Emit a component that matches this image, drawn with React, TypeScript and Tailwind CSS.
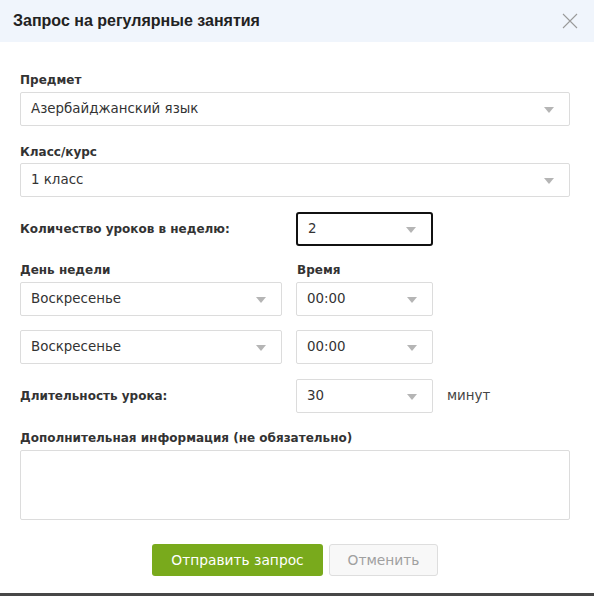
import React from "react";

const Caret = () => (
  <svg width="10" height="6" viewBox="0 0 10 6" className="shrink-0">
    <path d="M0 0 L10 0 L5 6 Z" fill="#b5b5b5" />
  </svg>
);

const Select = ({ value, className = "", focused = false }: { value: string; className?: string; focused?: boolean }) => (
  <div
    className={
      "flex h-[34px] items-center justify-between bg-white pl-[10px] pr-[15px] pt-px text-[13.4px] text-[#333] " +
      (focused ? "rounded-[3px] border-2 border-[#111] pl-[9px] pr-[14px] " : "rounded-[2px] border border-[#dcdcdc] ") +
      className
    }
  >
    <span>{value}</span>
    <Caret />
  </div>
);

export default function App() {
  const font = { fontFamily: '"DejaVu Sans", Verdana, sans-serif' };
  return (
    <div className="relative h-[596px] w-[594px] overflow-hidden bg-white" style={font}>
      <div className="flex h-[42px] items-center justify-between bg-[#f0f5fc] pl-[13px] pr-[16px]">
        <span
          className="text-[16px] font-bold text-[#222]"
          style={{ fontFamily: '"Liberation Sans", Arial, sans-serif' }}
        >
          Запрос на регулярные занятия
        </span>
        <svg width="16" height="16" viewBox="0 0 16 16">
          <path d="M1 1 L15 15 M15 1 L1 15" stroke="#9a9a9a" strokeWidth="1.1" />
        </svg>
      </div>

      <div className="pl-5 pr-6 pt-[30px]">
        <div className="h-4 text-[12px] font-bold leading-4 text-[#333]">Предмет</div>
        <Select value="Азербайджанский язык" className="mt-1" />

        <div className="mt-[18px] h-4 text-[12px] font-bold leading-4 text-[#333]">Класс/курс</div>
        <Select value="1 класс" className="mt-[3px]" />

        <div className="mt-[15px] flex items-center">
          <div className="w-[276px] text-[12px] font-bold text-[#333]">Количество уроков в неделю:</div>
          <Select value="2" focused className="w-[137px]" />
        </div>

        <div className="mt-4 flex h-4 text-[12px] font-bold leading-4 text-[#333]">
          <div className="w-[277px]">День недели</div>
          <div>Время</div>
        </div>
        <div className="mt-1 flex gap-[14px]">
          <Select value="Воскресенье" className="w-[262px]" />
          <Select value="00:00" className="w-[137px]" />
        </div>
        <div className="mt-[14px] flex gap-[14px]">
          <Select value="Воскресенье" className="w-[262px]" />
          <Select value="00:00" className="w-[137px]" />
        </div>

        <div className="mt-[15px] flex items-center">
          <div className="w-[276px] text-[12px] font-bold text-[#333]">Длительность урока:</div>
          <Select value="30" className="w-[137px]" />
          <span className="ml-[14px] text-[13.4px] text-[#444]">минут</span>
        </div>

        <div className="mt-[17px] h-4 text-[12px] font-bold leading-4 text-[#333]">
          Дополнительная информация (не обязательно)
        </div>
        <div className="mt-1 h-[70px] rounded-[2px] border border-[#dcdcdc] bg-white" />

        <div className="mt-6 flex justify-center gap-[6px]">
          <button className="h-[32px] w-[171px] rounded-[3px] bg-[#79aa1c] text-[13.8px] text-white">
            Отправить запрос
          </button>
          <button className="h-[32px] w-[109px] rounded-[3px] border border-[#dedede] bg-[#f8f8f8] text-[13.8px] text-[#a0a0a0]">
            Отменить
          </button>
        </div>
      </div>

      <div className="absolute bottom-0 left-0 h-[3px] w-full bg-[#474747]" />
    </div>
  );
}
